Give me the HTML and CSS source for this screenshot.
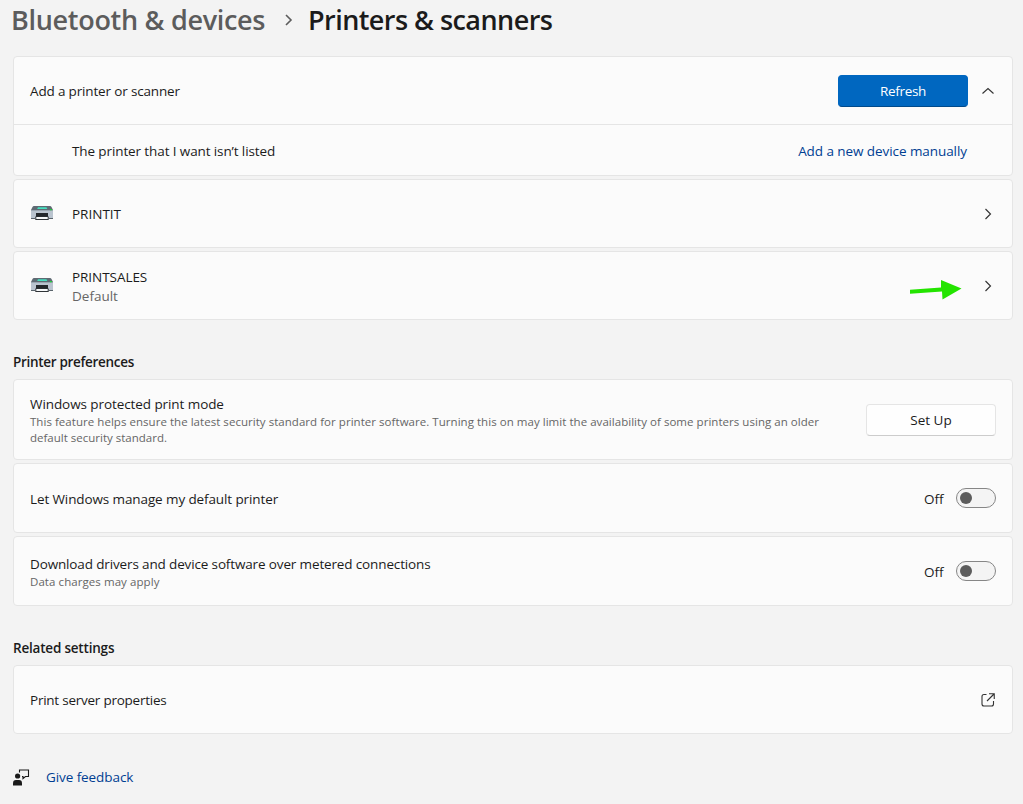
FILE: index.html
```html
<!DOCTYPE html>
<html lang="en">
<head>
<meta charset="utf-8">
<title>Printers &amp; scanners</title>
<link rel="stylesheet" href="styles.css">
</head>
<body>
<svg class="defs" width="0" height="0" aria-hidden="true">
  <symbol id="printer" viewBox="0 0 24 16">
    <path d="M4 1h16q1 0 1.500 1L23 5H1l1.500-3Q3 1 4 1z" fill="#5f6a73"/>
    <path d="M8 2.300h8.500l.8 1.700H7.200z" fill="#45e0c0"/>
    <path d="M1 5h22v8.500H1z" fill="#bac4cf"/>
    <path d="M1 5h22v1H1z" fill="#9aa6b1"/>
    <path d="M20 4h1.700v1.200H20z" fill="#17dc32"/>
    <path d="M1 13h4v1H1zM19 13h4v1h-4z" fill="#59636b"/>
    <path d="M6 8h12v4H6z" fill="#24282c"/>
    <path d="M5.300 11.500h13.400v3.500H5.300z" fill="#303438"/>
    <path d="M6.300 12h11.400v2H6.300z" fill="#f7f9fa"/>
  </symbol>
  <symbol id="chevron" viewBox="0 0 12 12"><path d="M3.500 1 8.500 6l-5 5" fill="none" stroke="#333" stroke-width="1.150"/></symbol>
</svg>
<main class="page">
  <h1 class="crumbs">
    <span class="crumb-parent">Bluetooth &amp; devices</span>
    <svg class="crumb-arrow" width="10" height="12" viewBox="0 0 10 12"><path d="M2 1 7 6l-5 5" fill="none" stroke="#5c5c5c" stroke-width="1.600"/></svg>
    <span class="crumb-current">Printers &amp; scanners</span>
  </h1>

  <section class="stack">
    <div class="card">
      <div class="row add-row">
        <span class="label t-add">Add a printer or scanner</span>
        <button class="button primary">Refresh</button>
        <svg class="chev" width="12" height="12" viewBox="0 0 12 12"><path d="m.500 8.500 5.500-5 5.500 5" fill="none" stroke="#333" stroke-width="1.150"/></svg>
      </div>
      <div class="row sub-row">
        <span class="label t-missing">The printer that I want isn’t listed</span>
        <a class="link t-manual">Add a new device manually</a>
      </div>
    </div>
    <div class="card row device">
      <svg class="printer" width="24" height="16"><use href="#printer"/></svg>
      <span class="label">PRINTIT</span>
      <svg class="chev" width="12" height="12"><use href="#chevron"/></svg>
    </div>
    <div class="card row device">
      <svg class="printer" width="24" height="16"><use href="#printer"/></svg>
      <div class="label two">
        <div class="t-sales">PRINTSALES</div>
        <div class="muted">Default</div>
      </div>
      <svg class="arrow" width="52" height="20" viewBox="0 0 52 20"><path d="M0 9.800 31 7.600V0l20.500 8.500L32.500 19.500 32 11.400 0 13.800z" fill="#24e400"/></svg>
      <svg class="chev" width="12" height="12"><use href="#chevron"/></svg>
    </div>
  </section>

  <h2 class="heading t-prefs">Printer preferences</h2>
  <section class="stack">
    <div class="card row protect">
      <div class="label">
        <div class="t-mode">Windows protected print mode</div>
        <div class="note"><span class="t-note">This feature helps ensure the latest security standard for printer software. Turning this on may limit the availability of some printers using an older</span><br><span>default security standard.</span></div>
      </div>
      <button class="button plain">Set Up</button>
    </div>
    <div class="card row option">
      <span class="label t-manage">Let Windows manage my default printer</span>
      <span class="state">Off</span>
      <span class="toggle"></span>
    </div>
    <div class="card row option">
      <div class="label">
        <div class="t-metered">Download drivers and device software over metered connections</div>
        <div class="note t-charges">Data charges may apply</div>
      </div>
      <span class="state">Off</span>
      <span class="toggle"></span>
    </div>
  </section>

  <h2 class="heading t-related">Related settings</h2>
  <section class="stack">
    <div class="card row server">
      <span class="label t-server">Print server properties</span>
      <svg class="open" width="14" height="14" viewBox="0 0 14 14"><path d="M5.500 1.500H3Q1 1.500 1 3.500v7.500q0 2 2 2h7.500q2 0 2-2V8M8 .750h5.250V6M13 1 6 8" fill="none" stroke="#333" stroke-width="1.100"/></svg>
    </div>
  </section>

  <footer class="feedback">
    <svg width="17" height="17" viewBox="0 0 17 17"><circle cx="4.600" cy="7" r="2.600" fill="#191919"/><path d="M0 16.500v-2.200q0-3.300 3-3.300h3q3 0 3 3.300v2.200z" fill="#191919"/><path d="M6.500 3.500v-2.500h9v6.500h-3L10 9.500v-2H9" fill="none" stroke="#191919" stroke-width="1.100"/></svg>
    <a class="link t-feedback">Give feedback</a>
  </footer>
</main>
</body>
</html>
```
FILE: styles.css
```css
* { box-sizing: border-box; }
body {
  margin: 0;
  background: #f3f3f3;
  color: #1b1b1b;
  font: 13.5px/20px "Open Sans", "Noto Sans", sans-serif;
}
.defs { position: absolute; }
.page { height: 804px; padding: 0 10px 0 13px; overflow: hidden; }
h1, h2 { margin: 0; }
.crumbs { display: flex; align-items: center; height: 56px; padding-bottom: 16px; font-size: 27px; font-weight: 600; line-height: 36px; white-space: nowrap; }
.crumb-parent { width: 273px; margin-left: -2px; color: #5c5c5c; letter-spacing: -0.3px; }
.crumb-arrow { margin-right: 14px; }
.crumb-current { letter-spacing: -0.55px; }
.stack { display: flex; flex-direction: column; gap: 3px; }
.card { border: 1px solid #e5e5e5; border-radius: 4px; background: #fbfbfb; }
.row { display: flex; align-items: center; padding: 0 16px; }
.label { flex: 1; white-space: nowrap; }
.add-row { height: 67px; padding-right: 18px; }
.add-row .chev { margin-left: 14px; }
.sub-row { height: 52px; padding: 0 45px 0 58px; border-top: 1px solid #e5e5e5; margin-bottom: -1px; }
.device { height: 69px; padding-right: 18px; }
.printer { margin: 0 18px 2px 0; }
.two { line-height: 19px; padding-top: 2px; }
.muted { color: #666; }
.arrow { margin: 8px 20px 0 0; }
.button { width: 130px; height: 32px; padding: 0; border-radius: 4px; font: inherit; }
.primary { border: 1px solid #0067c0; border-bottom-color: #004a8b; background: #0067c0; color: #fff; letter-spacing: -0.3px; }
.plain { border: 1px solid #e5e5e5; border-bottom-color: #ccc; background: #fefefe; color: #1b1b1b; }
.link { color: #003e92; white-space: nowrap; }
.heading { height: 59px; padding-top: 32px; font-size: 13.5px; font-weight: 600; line-height: 20px; }
.protect { height: 81px; }
.note { color: #666; font-size: 11.5px; line-height: 16px; }
.option { height: 70px; }
.option .label, .option .state { padding-top: 2px; }
.state { margin-right: 12.5px; }
.toggle { width: 40px; height: 20px; border: 1px solid #868686; border-radius: 10px; background: #f4f4f4; display: flex; align-items: center; padding-left: 3px; }
.toggle::before { content: ""; width: 12px; height: 12px; border-radius: 50%; background: #5c5c5c; }
.server { height: 69px; padding-right: 17px; }
.feedback { display: flex; align-items: center; gap: 16px; height: 20px; margin-top: 33px; }

/* Tracking per line */
.t-add { letter-spacing: -0.16px; }
.t-missing { letter-spacing: -0.11px; }
.t-manual { letter-spacing: -0.07px; }
.t-sales { letter-spacing: -0.05px; }
.t-mode { letter-spacing: -0.08px; }
.t-note { letter-spacing: 0.04px; }
.t-manage { letter-spacing: -0.11px; }
.t-metered { letter-spacing: -0.14px; }
.t-charges { letter-spacing: 0.07px; }
.t-prefs { letter-spacing: -0.31px; }
.t-related { letter-spacing: -0.2px; }
.t-server { letter-spacing: -0.24px; }
.t-feedback { letter-spacing: -0.08px; }
```
